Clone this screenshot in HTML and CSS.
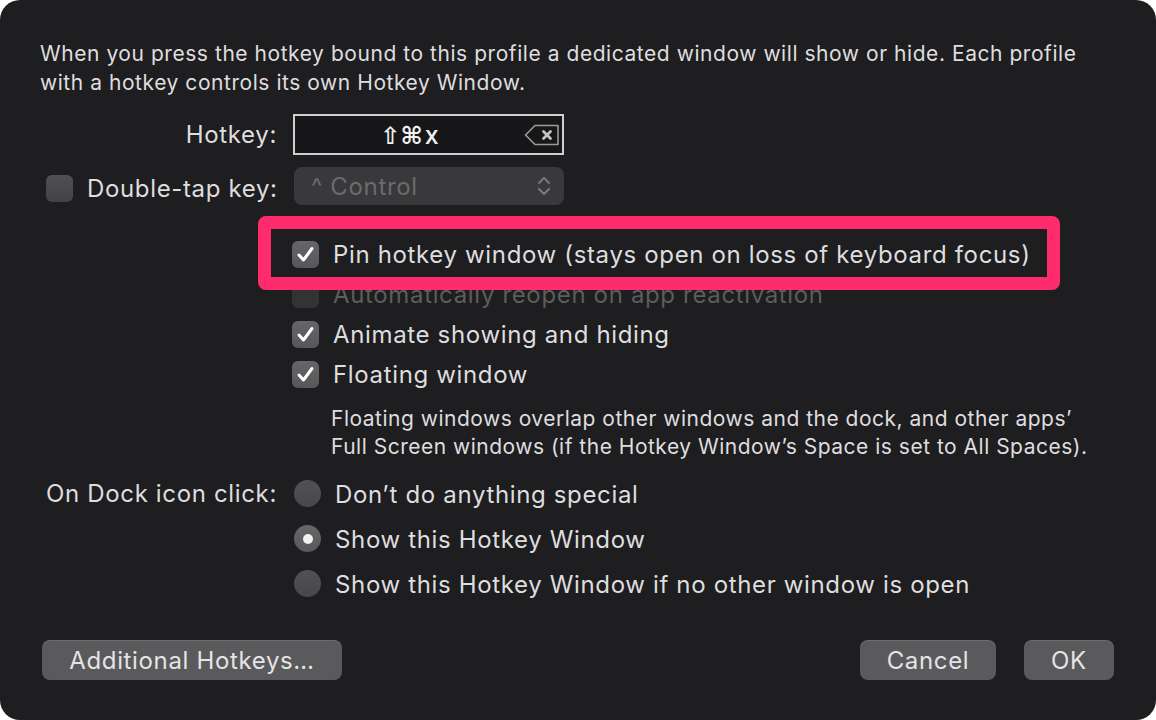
FILE: index.html
```html
<!DOCTYPE html>
<html>
<head>
<meta charset="utf-8">
<link rel="stylesheet" href="styles.css">
</head>
<body>
<div class="window">
  <p class="intro">When you press the hotkey bound to this profile a dedicated window will show or hide. Each profile<br>with a hotkey controls its own Hotkey Window.</p>

  <div class="row row-hotkey">
    <div class="label">Hotkey:</div>
    <div class="hotkey-field">
      <span class="keys"><span class="sym">⇧⌘</span><span class="letter">x</span></span>
      <svg class="clear" width="36" height="22" viewBox="0 0 36 22">
        <path d="M11 1.5 H34 V20.5 H11 L1.5 11 Z" fill="none" stroke="#9a9a9a" stroke-width="1.6" stroke-linejoin="round"/>
        <path d="M19.5 7.5 L26.5 14.5 M26.5 7.5 L19.5 14.5" stroke="#c4c4c4" stroke-width="2.8" stroke-linecap="round"/>
      </svg>
    </div>
  </div>

  <div class="row row-double">
    <div class="label label-check"><span class="box"></span><span>Double-tap key:</span></div>
    <div class="popup">
      <span>^ Control</span>
      <svg width="14" height="22" viewBox="0 0 14 22"><path d="M2 8 L7 3 L12 8 M2 14 L7 19 L12 14" fill="none" stroke="#7a7a7a" stroke-width="2" stroke-linecap="round" stroke-linejoin="round"/></svg>
    </div>
  </div>

  <div class="checks">
    <div class="check"><span class="box on"><svg width="27" height="27" viewBox="0 0 27 27"><path d="M7 14 L11.5 19 L20 7.5" fill="none" stroke="#fff" stroke-width="3" stroke-linecap="round" stroke-linejoin="round"/></svg></span><span>Pin hotkey window (stays open on loss of keyboard focus)</span></div>
    <div class="check disabled"><span class="box"></span><span>Automatically reopen on app reactivation</span></div>
    <div class="check"><span class="box on"><svg width="27" height="27" viewBox="0 0 27 27"><path d="M7 14 L11.5 19 L20 7.5" fill="none" stroke="#fff" stroke-width="3" stroke-linecap="round" stroke-linejoin="round"/></svg></span><span>Animate showing and hiding</span></div>
    <div class="check"><span class="box on"><svg width="27" height="27" viewBox="0 0 27 27"><path d="M7 14 L11.5 19 L20 7.5" fill="none" stroke="#fff" stroke-width="3" stroke-linecap="round" stroke-linejoin="round"/></svg></span><span>Floating window</span></div>
  </div>

  <p class="note">Floating windows overlap other windows and the dock, and other apps’<br>Full Screen windows (if the Hotkey Window’s Space is set to All Spaces).</p>

  <div class="row row-dock">
    <div class="label label-left">On Dock icon click:</div>
    <div class="radios">
      <div class="radio"><span class="dot"></span><span>Don’t do anything special</span></div>
      <div class="radio"><span class="dot on"></span><span>Show this Hotkey Window</span></div>
      <div class="radio"><span class="dot"></span><span>Show this Hotkey Window if no other window is open</span></div>
    </div>
  </div>

  <div class="buttons">
    <button class="btn btn-additional">Additional Hotkeys…</button>
    <div class="spacer"></div>
    <button class="btn btn-cancel">Cancel</button>
    <button class="btn btn-ok">OK</button>
  </div>

  <div class="highlight"></div>
</div>
</body>
</html>
```

FILE: styles.css
```css
html, body {
  margin: 0;
  padding: 0;
  background: #ffffff;
}

.window {
  position: relative;
  width: 1156px;
  height: 720px;
  box-sizing: border-box;
  background: #1e1d1f;
  border-radius: 20px;
  padding: 39px 42px 40px 42px;
  display: flex;
  flex-direction: column;
  font-family: Inter, "Noto Sans", sans-serif;
  color: #dedddf;
  font-size: 24px;
  letter-spacing: 0.65px;
  overflow: hidden;
}

.intro {
  margin: 0 0 0 -2px;
  font-size: 21px;
  letter-spacing: 0.55px;
  line-height: 29px;
  white-space: nowrap;
}

.row {
  display: flex;
  align-items: center;
}

.label {
  width: 235px;
  margin-right: 16px;
  text-align: right;
  flex: none;
  white-space: nowrap;
}

.row-hotkey {
  margin-top: 17px;
}

.hotkey-field {
  width: 271px;
  height: 41px;
  box-sizing: border-box;
  border: 2px solid #cfcfcf;
  background: #171618;
  display: flex;
  align-items: center;
  justify-content: center;
  position: relative;
}

.keys {
  color: #f0f0f0;
  margin-left: -38px;
  letter-spacing: 0;
  display: flex;
  align-items: baseline;
}

.sym {
  font-family: "DejaVu Sans", sans-serif;
  font-size: 24px;
  font-weight: bold;
}

.letter {
  font-family: Inter, sans-serif;
  font-size: 25px;
  font-weight: 500;
  margin-left: 2px;
}

.clear {
  position: absolute;
  right: 2px;
  top: 8px;
}

.row-double {
  margin-top: 12px;
}

.label-check {
  display: flex;
  align-items: center;
  justify-content: flex-start;
  text-align: left;
  gap: 14px;
  padding-left: 4px;
  width: 231px;
  padding-top: 5px;
}

.box {
  width: 27px;
  height: 27px;
  border-radius: 6px;
  background: linear-gradient(#504f52, #434245);
  flex: none;
  display: flex;
}

.box.on {
  background: linear-gradient(#666568, #575659);
}

.popup {
  width: 270px;
  height: 38px;
  box-sizing: border-box;
  border-radius: 8px;
  background: #39383a;
  color: #6c6b6d;
  display: flex;
  align-items: center;
  justify-content: space-between;
  padding: 0 13px 0 17px;
  margin-left: 1px;
}

.checks {
  margin-top: 36px;
  margin-left: 250px;
  display: flex;
  flex-direction: column;
  gap: 13px;
}

.check {
  display: flex;
  align-items: center;
  gap: 14px;
  height: 27px;
}

.radio > span:last-child {
  padding-top: 1px;
}

.check.disabled {
  color: #5d5c5e;
}

.check.disabled .box {
  background: #333235;
}

.note {
  margin: 17px 0 0 289px;
  font-size: 21px;
  letter-spacing: 0.5px;
  line-height: 28px;
}

.row-dock {
  margin-top: 19px;
  align-items: flex-start;
}

.label-left {
  text-align: right;
  line-height: 28px;
}

.radios {
  display: flex;
  flex-direction: column;
  gap: 18px;
  margin-left: 1px;
}

.radio {
  display: flex;
  align-items: center;
  gap: 14px;
  height: 27px;
}

.dot {
  width: 27px;
  height: 27px;
  border-radius: 50%;
  background: linear-gradient(#515053, #48474a);
  flex: none;
  display: flex;
  align-items: center;
  justify-content: center;
}

.dot.on {
  background: linear-gradient(#666568, #59585b);
}

.dot.on::after {
  content: "";
  width: 10px;
  height: 10px;
  border-radius: 50%;
  background: #f2f2f2;
}

.buttons {
  margin-top: auto;
  display: flex;
  align-items: center;
}

.spacer {
  flex: 1;
}

.btn {
  height: 40px;
  border: none;
  border-radius: 8px;
  background: #5a595b;
  box-shadow: inset 0 1px 0 rgba(255,255,255,0.12);
  color: #e4e3e5;
  font-family: Inter, "Noto Sans", sans-serif;
  font-size: 24px;
  letter-spacing: 0.65px;
  padding: 0;
}

.btn-additional { width: 300px; }
.btn-cancel { width: 136px; margin-right: 28px; }
.btn-ok { width: 90px; }

.highlight {
  position: absolute;
  left: 258px;
  top: 216px;
  width: 802px;
  height: 74px;
  box-sizing: border-box;
  border: 13px solid #fe2c6c;
  border-radius: 8px;
}
```
